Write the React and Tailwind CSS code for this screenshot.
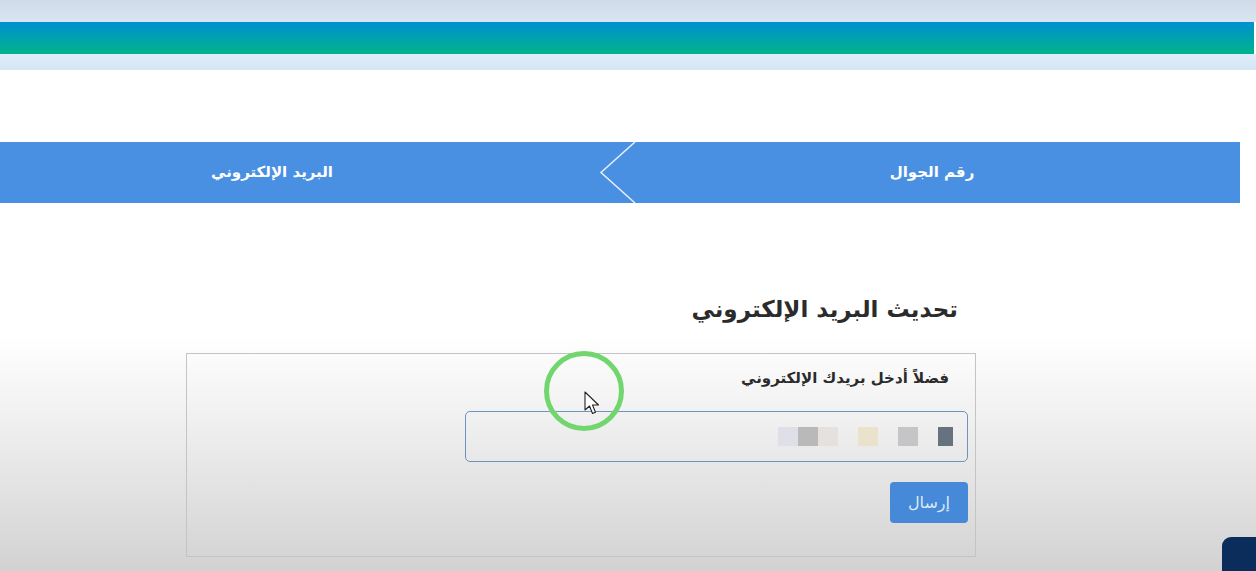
import React from "react";

export default function App() {
  return (
    <div
      className="relative w-[1256px] h-[571px] overflow-hidden bg-[linear-gradient(to_bottom,#ffffff_0px,#ffffff_335px,#f0f0f0_420px,#d2d2d2_571px)]"
      style={{ fontFamily: '"DejaVu Sans", "Noto Sans", sans-serif' }}
    >
      {/* header bands */}
      <div className="h-[22px] bg-[linear-gradient(to_bottom,#cfdbe8,#d9e5f1)]" />
      <div className="h-[32px] w-[1254px] bg-[linear-gradient(to_bottom,#0090d0,#00b48c)]" />
      <div className="h-[16px] bg-[linear-gradient(to_bottom,#dfedfb,#d6e6f5)]" />

      {/* tabs */}
      <div className="mt-[72px] relative flex h-[61px] w-[1240px] bg-[#4a90e2] text-white font-bold text-[15px]">
        <div className="w-[600px] flex items-center justify-center pr-[56px]" dir="rtl">
          البريد الإلكتروني
        </div>
        <div className="flex-1 flex items-center justify-center pl-[24px]" dir="rtl">
          رقم الجوال
        </div>
        <svg className="absolute left-[598px] top-0" width="40" height="61" viewBox="0 0 40 61">
          <polyline points="37,0 3,30.5 37,61" fill="none" stroke="#e6f0fb" strokeWidth="1.5" />
        </svg>
      </div>

      {/* content */}
      <div className="ml-[186px] w-[790px]" dir="rtl">
        <h2 className="mt-[89px] pr-[18px] text-[23px] leading-[34px] font-bold text-[#2b2b2b]">
          تحديث البريد الإلكتروني
        </h2>
        <div className="mt-[27px] h-[204px] border border-[#c4c4c4] pr-[7px] pt-[14px]">
          <div className="pr-[19px] text-[15px] leading-[20px] font-bold text-[#2b2b2b]">
            فضلاً أدخل بريدك الإلكتروني
          </div>
          <div className="mt-[23px] flex items-center w-[503px] h-[51px] rounded-[5px] border border-[#6e93c2] pr-[14px] gap-[20px]">
            <div className="w-[15px] h-[19px] bg-[#66727f]" />
            <div className="w-[20px] h-[19px] bg-[#c5c5c7]" />
            <div className="w-[20px] h-[19px] bg-[#ebe2cd]" />
            <div className="flex h-[19px]">
              <div className="w-[20px] bg-[#e5e1de]" />
              <div className="w-[20px] bg-[#b9b9b9]" />
              <div className="w-[20px] bg-[#dfe0e7]" />
            </div>
          </div>
          <button className="mt-[20px] w-[78px] h-[41px] rounded-[4px] bg-[#4589d8] text-[#dde9f7] text-[16px]">
            إرسال
          </button>
        </div>
      </div>

      {/* cursor highlight */}
      <div className="absolute left-[544px] top-[351px] w-[80px] h-[80px] rounded-full border-[5px] border-[#72d66f]" />
      <svg className="absolute left-[584px] top-[391px]" width="16" height="26" viewBox="0 0 16 26">
        <path d="M1 1 L1 19 L5.5 15 L8.5 22.5 L11.5 21.2 L8.5 14 L14.5 14 Z" fill="#ffffff" stroke="#222" strokeWidth="1.1" strokeLinejoin="round" />
      </svg>

      {/* bottom-right dark widget */}
      <div className="absolute left-[1222px] top-[537px] w-[60px] h-[60px] rounded-[9px] bg-[#0b2d5c]" />
    </div>
  );
}
